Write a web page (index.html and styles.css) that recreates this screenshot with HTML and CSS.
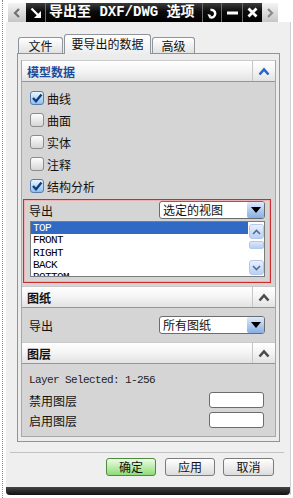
FILE: index.html
```html
<!DOCTYPE html>
<html lang="zh-CN">
<head>
  <meta charset="UTF-8">
  <meta name="viewport" content="width=device-width, initial-scale=1.0">
  <title>导出至 DXF/DWG 选项</title>
  <link rel="stylesheet" href="styles.css">
</head>
<body>
  <div class="screen">
    <div class="titlebar">
      <span class="tb-grey tb-left">
        <svg width="8" height="10" viewBox="0 0 8 10"><polyline points="6,1 2,5 6,9" fill="none" stroke="#707070" stroke-width="2.2"/></svg>
      </span>
      <span class="tb-icon">
        <svg width="12" height="12" viewBox="0 0 12 12"><line x1="1.5" y1="1.5" x2="8" y2="8" stroke="#fff" stroke-width="2.2"/><polygon points="11,4 11,11 4,11" fill="#fff"/></svg>
      </span>
      <span class="tb-title">导出至 DXF/DWG 选项</span>
      <span class="tb-cell tb-reset">
        <svg width="12" height="12" viewBox="0 0 12 12"><path d="M4.5 3 A3.8 3.8 0 1 1 4 10.2" fill="none" stroke="#fff" stroke-width="2.4"/><polygon points="1.5,7 5,8 3.5,11.5" fill="#fff"/></svg>
      </span>
      <span class="tb-cell tb-min">
        <svg width="11" height="4" viewBox="0 0 11 4"><rect x="0" y="0.5" width="11" height="3" fill="#fff"/></svg>
      </span>
      <span class="tb-cell tb-close">
        <svg width="11" height="11" viewBox="0 0 11 11"><path d="M1.5 1.5 L9.5 9.5 M9.5 1.5 L1.5 9.5" stroke="#fff" stroke-width="2.8"/></svg>
      </span>
      <span class="tb-grey tb-right">
        <svg width="8" height="10" viewBox="0 0 8 10"><polyline points="2,1 6,5 2,9" fill="none" stroke="#8a8a8a" stroke-width="2.2"/></svg>
      </span>
    </div>

    <div class="dialog">
      <div class="tabs">
        <div class="tab tab-file">文件</div>
        <div class="tab tab-data active">要导出的数据</div>
        <div class="tab tab-adv">高级</div>
      </div>

      <div class="panel">
        <!-- 模型数据 -->
        <div class="section">
          <div class="sec-head">
            <span class="sec-title blue">模型数据</span>
            <span class="sec-toggle">
              <svg width="12" height="9" viewBox="0 0 12 9"><polyline points="1.5,7.5 6,2.5 10.5,7.5" fill="none" stroke="#2466d0" stroke-width="2.6"/></svg>
            </span>
          </div>
          <div class="sec-body model">
            <label class="check-row"><span class="cb on"><svg width="12" height="12" viewBox="0 0 12 12"><path d="M2 6 L5 9.2 L10.5 2.5" fill="none" stroke="#173a78" stroke-width="2.4"/></svg></span>曲线</label>
            <label class="check-row"><span class="cb"></span>曲面</label>
            <label class="check-row"><span class="cb"></span>实体</label>
            <label class="check-row"><span class="cb"></span>注释</label>
            <label class="check-row"><span class="cb on"><svg width="12" height="12" viewBox="0 0 12 12"><path d="M2 6 L5 9.2 L10.5 2.5" fill="none" stroke="#173a78" stroke-width="2.4"/></svg></span>结构分析</label>

            <div class="highlight">
              <div class="field-row">
                <span>导出</span>
                <div class="select">
                  <span class="select-text">选定的视图</span>
                  <span class="select-btn"><svg width="10" height="6" viewBox="0 0 10 6"><polygon points="0,0 10,0 5,6" fill="#000"/></svg></span>
                </div>
              </div>
              <div class="listbox">
                <ul class="items">
                  <li class="sel">TOP</li>
                  <li>FRONT</li>
                  <li>RIGHT</li>
                  <li>BACK</li>
                  <li>BOTTOM</li>
                </ul>
                <div class="scrollbar">
                  <span class="sb-btn"><svg width="9" height="6" viewBox="0 0 9 6"><polyline points="1,5 4.5,1.5 8,5" fill="none" stroke="#4d6d9c" stroke-width="1.6"/></svg></span>
                  <span class="sb-thumb"></span>
                  <span class="sb-space"></span>
                  <span class="sb-btn"><svg width="9" height="6" viewBox="0 0 9 6"><polyline points="1,1 4.5,4.5 8,1" fill="none" stroke="#4d6d9c" stroke-width="1.6"/></svg></span>
                </div>
              </div>
            </div>
          </div>
        </div>

        <!-- 图纸 -->
        <div class="section">
          <div class="sec-head">
            <span class="sec-title">图纸</span>
            <span class="sec-toggle">
              <svg width="12" height="9" viewBox="0 0 12 9"><polyline points="1.5,7.5 6,2.5 10.5,7.5" fill="none" stroke="#4a4a4a" stroke-width="2.6"/></svg>
            </span>
          </div>
          <div class="sec-body drawings">
            <div class="field-row">
              <span>导出</span>
              <div class="select">
                <span class="select-text">所有图纸</span>
                <span class="select-btn"><svg width="10" height="6" viewBox="0 0 10 6"><polygon points="0,0 10,0 5,6" fill="#000"/></svg></span>
              </div>
            </div>
          </div>
        </div>

        <!-- 图层 -->
        <div class="section last">
          <div class="sec-head">
            <span class="sec-title">图层</span>
            <span class="sec-toggle">
              <svg width="12" height="9" viewBox="0 0 12 9"><polyline points="1.5,7.5 6,2.5 10.5,7.5" fill="none" stroke="#4a4a4a" stroke-width="2.6"/></svg>
            </span>
          </div>
          <div class="sec-body layers">
            <div class="layer-info">Layer Selected: 1-256</div>
            <div class="layer-row"><span>禁用图层</span><span class="input"></span></div>
            <div class="layer-row"><span>启用图层</span><span class="input"></span></div>
          </div>
        </div>
      </div>

      <div class="footer">
        <button class="btn ok">确定</button>
        <button class="btn apply">应用</button>
        <button class="btn cancel">取消</button>
      </div>

      <div class="bottom-bar"></div>
    </div>
  </div>
</body>
</html>
```

FILE: styles.css
```css
body {
  margin: 0;
  background: #fff;
  font-family: "Noto Sans CJK SC", "Liberation Sans", sans-serif;
  font-size: 12px;
  color: #111;
}
.screen {
  margin-left: 2px;
  height: 498px;
  box-sizing: border-box;
  border-left: 1px dotted #8a8a8a;
  padding-top: 3px;
  overflow: hidden;
}

/* title bar */
.titlebar {
  display: flex;
  margin-left: 5px;
  width: 270px;
  height: 19px;
  background: linear-gradient(#3c3c3c, #0c0c0c 45%, #000);
}
.tb-grey {
  display: flex;
  align-items: center;
  justify-content: center;
  background: linear-gradient(#f4f4f4, #c6c6c6);
}
.tb-left {
  width: 18px;
}
.tb-right {
  width: 16px;
}
.tb-icon {
  width: 19px;
  border-right: 1px solid #6c6c6c;
  display: flex;
  align-items: center;
  justify-content: center;
}
.tb-title {
  flex: 1;
  padding-left: 3px;
  color: #fff;
  font: bold 14px/19px "Liberation Mono", "Noto Sans CJK SC", monospace;
  white-space: nowrap;
  overflow: hidden;
}
.tb-cell {
  border-left: 1px solid #6c6c6c;
  display: flex;
  align-items: center;
  justify-content: center;
}
.tb-reset {
  width: 18px;
}
.tb-min {
  width: 20px;
}
.tb-close {
  width: 19px;
}

/* dialog */
.dialog {
  margin-left: 3px;
  width: 285px;
  height: 473px;
  box-sizing: border-box;
  padding-top: 12px;
  background: #efefef;
  border-right: 1px solid #cfcfcf;
  display: flex;
  flex-direction: column;
}
.tabs {
  display: flex;
  align-items: flex-end;
  gap: 1px;
  height: 19px;
  margin-left: 12px;
  position: relative;
  z-index: 1;
}
.tab {
  height: 16px;
  box-sizing: border-box;
  border: 1px solid #8e959a;
  border-bottom: none;
  border-radius: 3px 3px 0 0;
  background: linear-gradient(#ffffff, #e2e2e2);
  text-align: center;
  line-height: 15px;
}
.tab-file {
  width: 45px;
}
.tab-data {
  width: 87px;
}
.tab-adv {
  width: 43px;
}
.tab.active {
  height: 20px;
  margin-bottom: -1px;
  background: linear-gradient(#ffffff, #ededed);
  line-height: 17px;
}
.panel {
  margin-left: 11px;
  width: 263px;
  height: 389px;
  box-sizing: border-box;
  border: 1px solid #8e959a;
  background: #ececec;
  padding: 6px 3px 0;
}

/* collapsible sections */
.section {
  border-left: 1px solid #a8a8a8;
  border-right: 1px solid #a8a8a8;
}
.section.last {
  border-bottom: 1px solid #a8a8a8;
}
.sec-head {
  height: 22px;
  box-sizing: border-box;
  border-top: 1px solid #cacaca;
  border-bottom: 1px solid #969696;
  background: linear-gradient(#ffffff, #f4f4f4 50%, #e2e2e2);
  display: flex;
  align-items: center;
}
.sec-title {
  flex: 1;
  padding-left: 5px;
  font-weight: bold;
  color: #111;
}
.sec-title.blue {
  color: #1d4c9c;
}
.sec-toggle {
  width: 22px;
  align-self: stretch;
  border-left: 1px solid #c6c6c6;
  display: flex;
  align-items: center;
  justify-content: center;
}
.sec-body {
  background: #d5d5d5;
  box-sizing: border-box;
}
.sec-body.model {
  height: 204px;
  padding-top: 5px;
}
.check-row {
  display: flex;
  align-items: center;
  gap: 3px;
  height: 22px;
  padding-left: 8px;
}
.cb {
  width: 14px;
  height: 14px;
  box-sizing: border-box;
  border: 1px solid #8c8c8c;
  border-radius: 3px;
  background: linear-gradient(#fdfdfd, #d6d6d6);
  display: flex;
  align-items: center;
  justify-content: center;
}
.cb.on {
  border-color: #5a7ca6;
  background: linear-gradient(#eaf5ff, #86c2f2);
}

/* red highlighted block */
.highlight {
  margin: 2px 4px 0 1px;
  padding: 1px 5px 5px;
  border: 1px solid #d22a2a;
  box-shadow: inset 0 0 0 1px #eeb0b0;
}
.field-row {
  display: flex;
  align-items: center;
  justify-content: space-between;
  height: 18px;
}
.select {
  width: 106px;
  height: 18px;
  box-sizing: border-box;
  border: 1px solid #6c6c6c;
  border-radius: 3px;
  background: #fff;
  display: flex;
  align-items: center;
  padding-left: 3px;
}
.select-text {
  flex: 1;
  line-height: 16px;
}
.select-btn {
  width: 17px;
  height: 16px;
  border-radius: 2px;
  background: linear-gradient(#dfeafb, #86aee6);
  display: flex;
  align-items: center;
  justify-content: center;
}
.listbox {
  margin: 2px 0 0 1px;
  height: 56px;
  box-sizing: border-box;
  border: 1px solid #7c7c7c;
  background: #fff;
  display: flex;
  overflow: hidden;
}
.items {
  flex: 1;
  list-style: none;
  margin: 0;
  padding: 0;
  font: 11px/12.3px "Liberation Mono", monospace;
  letter-spacing: -0.6px;
  color: #000;
  overflow: hidden;
}
.items li {
  height: 12.3px;
  padding-left: 2px;
}
.items li.sel {
  background: #316ac5;
  color: #fff;
}
.scrollbar {
  width: 16px;
  display: flex;
  flex-direction: column;
  align-items: center;
  padding: 2px 0 1px;
  box-sizing: border-box;
}
.sb-btn {
  width: 15px;
  height: 15px;
  box-sizing: border-box;
  border: 1px solid #b4c8ea;
  border-radius: 3px;
  background: linear-gradient(#e8f0fd, #bad0f4);
  display: flex;
  align-items: center;
  justify-content: center;
}
.sb-thumb {
  width: 15px;
  height: 8px;
  margin-top: 2px;
  box-sizing: border-box;
  border: 1px solid #b4c8ea;
  border-radius: 2px;
  background: linear-gradient(#dbe6fa, #b8cdf2);
}
.sb-space {
  flex: 1;
}

/* drawings and layers */
.sec-body.drawings {
  padding: 8px 10px 8px 7px;
}
.sec-body.layers {
  padding: 6px 11px 6px 7px;
}
.layer-info {
  font: 11px/20px "Liberation Mono", monospace;
  letter-spacing: -0.6px;
  color: #222;
}
.layer-row {
  display: flex;
  align-items: center;
  justify-content: space-between;
  height: 20px;
}
.input {
  width: 55px;
  height: 16px;
  box-sizing: border-box;
  border: 1px solid #6c6c6c;
  border-radius: 3px;
  background: #fff;
}

/* buttons */
.footer {
  margin: 10px 6px 0 4px;
  padding: 5px 10px 0 0;
  border-top: 1px solid #c2c2c2;
  display: flex;
  justify-content: flex-end;
  gap: 8px;
}
.btn {
  width: 50px;
  height: 18px;
  padding: 0;
  border: 1px solid #7b7b7b;
  border-radius: 3px;
  background: linear-gradient(#ffffff, #dcdcdc);
  font-family: "Noto Sans CJK SC", sans-serif;
  font-size: 12px;
  line-height: 16px;
  color: #111;
}
.btn.ok {
  margin-right: 1px;
  border-color: #4d8a3c;
  background: linear-gradient(#eefce6, #8ddc76);
}
.btn.cancel {
  width: 51px;
}
.bottom-bar {
  margin-top: auto;
  height: 8px;
  border-radius: 0 0 4px 4px;
  background: linear-gradient(#444, #111);
}
```
